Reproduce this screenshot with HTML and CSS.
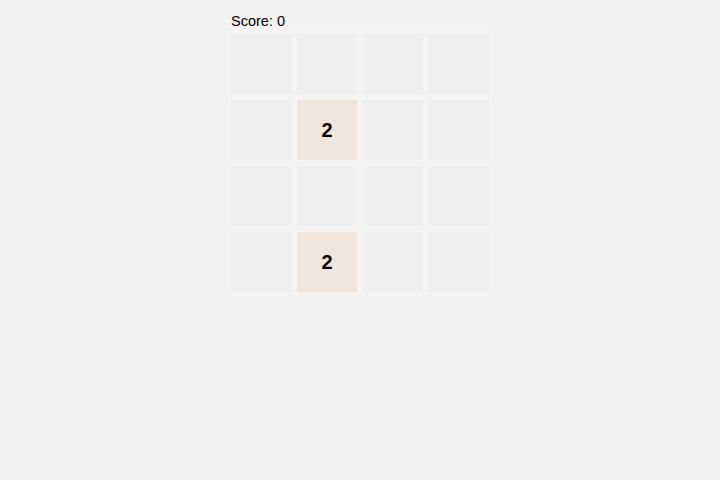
FILE: index.html
```html
<!DOCTYPE html>
<html lang="en">
<head>
    <meta charset="UTF-8">
    <title>2048</title>
    <link rel="stylesheet" href="styles.css">
</head>
<body>
    <div id="game">
        <div class="score">Score: <span id="score">0</span></div>
        <div id="board">
            <div class="cell"></div>
            <div class="cell"></div>
            <div class="cell"></div>
            <div class="cell"></div>

            <div class="cell"></div>
            <div class="cell tile-2">2</div>
            <div class="cell"></div>
            <div class="cell"></div>

            <div class="cell"></div>
            <div class="cell"></div>
            <div class="cell"></div>
            <div class="cell"></div>

            <div class="cell"></div>
            <div class="cell tile-2">2</div>
            <div class="cell"></div>
            <div class="cell"></div>
        </div>
    </div>
</body>
</html>
```

FILE: styles.css
```css
body {
    margin: 0;
    background: #f2f2f2;
    font-family: "Liberation Sans", Arial, sans-serif;
    color: #000;
}

#game {
    width: 264px;
    margin: 0 auto;
    padding-top: 11px;
}

.score {
    padding-left: 3px;
    font-size: 14.5px;
    line-height: 20px;
    height: 20px;
}

#board {
    display: grid;
    grid-template-columns: repeat(4, 60px);
    grid-auto-rows: 60px;
    gap: 6px;
    padding: 3px;
    background: #f4f4f4;
}

.cell {
    display: flex;
    align-items: center;
    justify-content: center;
    background: #efefef;
    font-size: 20px;
    font-weight: bold;
}

.tile-2 {
    background: #f0e6dc;
}
```
